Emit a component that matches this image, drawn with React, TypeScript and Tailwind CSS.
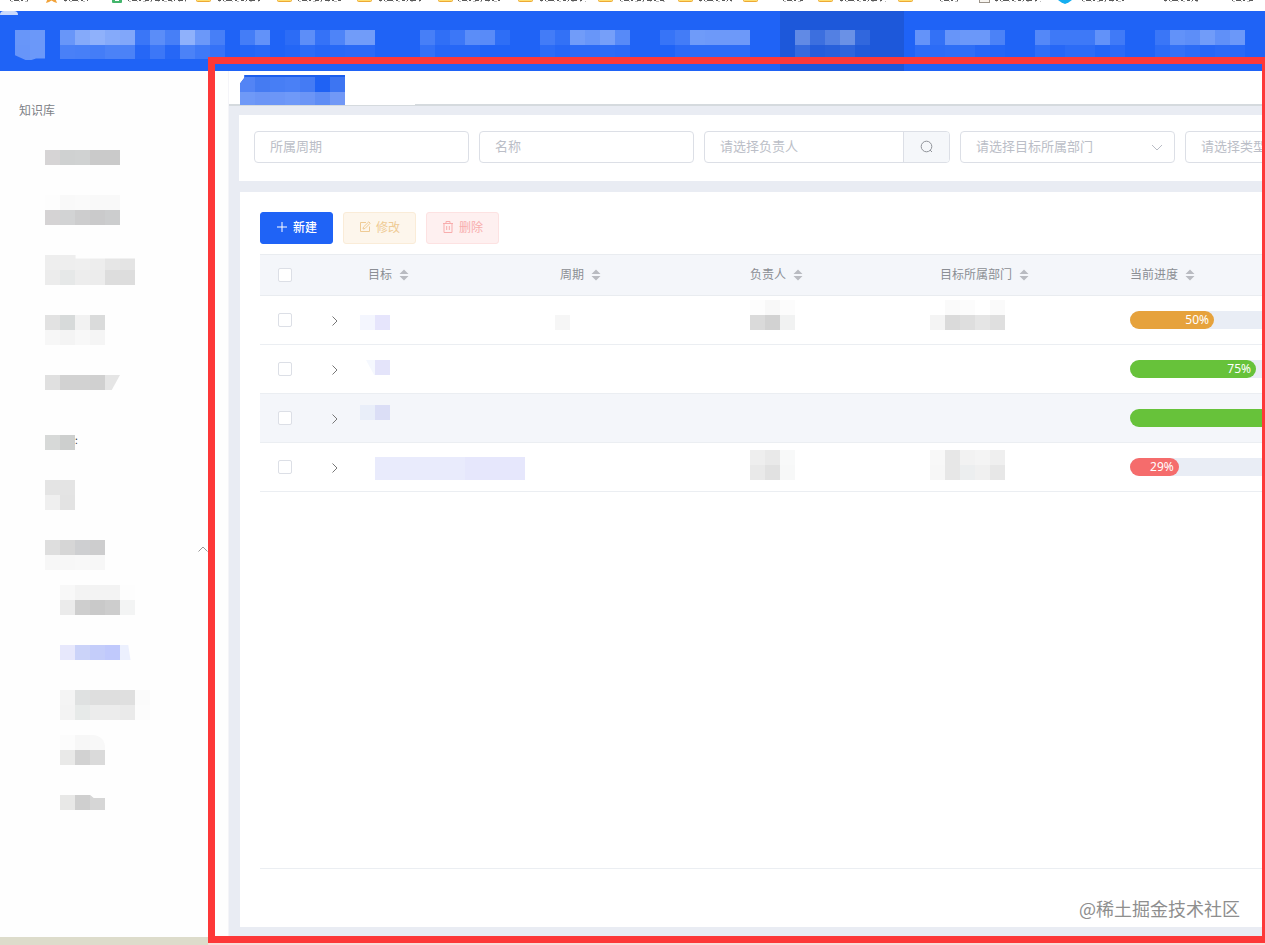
import React from 'react';

// A mosaic is a list of rows, every cell is 15px wide; "" leaves the cell empty
type Cells = string[][];

interface MenuItem {
  className: string;
  cells: Cells;
}

interface GoalRow {
  goal: React.ReactNode;
  period?: React.ReactNode;
  owner?: React.ReactNode;
  dept?: React.ReactNode;
  percent: number;
  color: string;
  active?: boolean;
}

const Mosaic: React.FC<{ cells: Cells; className?: string }> = ({ cells, className = '' }) => (
  <div className={`shrink-0 ${className}`}>
    {cells.map((row, r) => (
      <div key={r} className="flex">
        {row.map((color, c) => (
          <span key={c} className="block h-[15px] w-[15px] shrink-0" style={{ backgroundColor: color || 'transparent' }} />
        ))}
      </div>
    ))}
  </div>
);

// Bookmarks
const folders = [197, 278, 358, 439, 519, 599, 679, 744, 819, 899];
const labels = [
  [10, 18], [64, 24], [128, 58], [218, 44], [298, 43], [379, 45], [458, 42], [540, 46],
  [620, 46], [699, 33], [783, 20], [840, 46], [940, 18], [995, 46], [1082, 42], [1164, 34], [1232, 22],
];

const BookmarkStrip = () => (
  <svg className="block h-[11px] w-full shrink-0" viewBox="0 0 1265 11">
    {labels.map(([x, width], index) => (
      <g key={x} stroke="#5a5a5a">
        <line x1={x} x2={x + width} y1="0.5" y2="0.5" strokeDasharray={index % 2 ? '3 2 1 2 6 3 2 4' : '1 3 5 2 2 4 4 2'} />
        <line x1={x + 1} x2={x + width} y1="1.5" y2="1.5" strokeDasharray={index % 2 ? '1 4 2 6' : '2 6 1 5 3 4'} strokeOpacity="0.4" />
      </g>
    ))}
    {folders.map((x) => (
      <rect key={x} x={x - 0.5} y="-4.5" width="14" height="6" rx="1" fill="#ffdf6e" stroke="#eda934" />
    ))}
    <path d="M46 3l1.500-4h8l1.500 4-3-1-2.500-1.500-2.500 1.500z" fill="#f2a33a" />
    <rect x="112" y="-2" width="10" height="5" rx="1" fill="#43b56c" />
    <rect x="115" y="0" width="4" height="1" fill="#fff" />
    <rect x="979.500" y="-3.500" width="10" height="6" fill="#f8f5f0" stroke="#9c948a" />
    <path d="M1058 0h14l-3.500 2.500-3.500 1.500-3.500-1.500z" fill="#14aef0" />
  </svg>
);

// Header
const w = (alpha: number) => (alpha ? `rgba(255,255,255,${alpha / 100})` : '');

const logoCells: Cells = [[w(33), w(34)], [w(32), w(34)]];
const titleCells: Cells = [
  [w(33), w(46), w(50), w(46), w(44), w(12), w(27), w(18), w(50), w(34), w(18)],
  [w(19), w(18), w(17), w(20), w(20), w(3), w(13), w(3), w(20), w(14), w(10)],
];

const navItems: MenuItem[] = [
  { className: 'w-[120px]', cells: [[w(18), w(8), w(13), w(27), w(26), w(7)], [w(9), w(3), w(3), w(3), '', '']] },
  { className: 'w-[120px]', cells: [[w(16), w(9), w(37), w(33), w(39), w(25)], [w(6), w(3), w(5), w(5), w(6), w(5)]] },
  { className: 'w-[120px]', cells: [[w(11), w(16), w(36), w(35), w(35), w(35)], ['', w(5), w(6), w(6), w(6), w(6)]] },
  { className: 'mr-[11px] w-[124px] bg-[#1d58da]', cells: [['', w(30), w(14), w(24), w(34), w(9)], ['', w(11), w(3), w(5), w(8), w(2)]] },
  { className: 'w-[120px]', cells: [[w(31), w(9), w(32), w(34), w(34), w(20)], [w(6), w(6), w(7), w(7), w(3), w(2)]] },
  { className: 'w-[120px]', cells: [[w(24), w(14), w(14), w(14), w(30), w(15)], [w(7), w(3), w(6), w(6), w(2), w(5)]] },
  { className: 'w-[110px]', cells: [[w(12), w(30), w(28), w(37), w(29), w(34)], [w(6), w(9), w(6), w(3), w(5), w(4)]] },
];

const Header = () => (
  <header className="flex h-[60px] w-full shrink-0 overflow-hidden bg-[#1f63f6]">
    <div className="-mr-[3px] h-1 w-[18px] shrink-0 rounded-t-full bg-[#cbdafb]" />
    <Mosaic cells={logoCells} className="mt-[19px] h-[30px] [clip-path:polygon(0_0,100%_0,100%_95%,70%_95%,55%_100%,35%_100%,0_84%)]" />
    <Mosaic cells={titleCells} className="mt-[19px] ml-[15px] h-[29px] overflow-hidden" />
    <Mosaic cells={[[w(17), w(30)], [w(2), w(4)]]} className="mt-[19px] ml-[15px]" />
    <Mosaic cells={[[w(6), w(28), w(10), w(21), w(37), w(37)], [w(2), w(6), w(3), w(4), w(5), w(5)]]} className="mt-[19px] ml-[15px] mr-[45px]" />
    {navItems.map((item, index) => (
      <div key={index} className={`shrink-0 pt-[19px] ${item.className}`}>
        <Mosaic cells={item.cells} />
      </div>
    ))}
  </header>
);

// Sidebar
const menuItems: MenuItem[] = [
  { className: 'ml-[45px]', cells: [['#d6d4d5', '#cfd1d1', '#d0d2d2', '#cacaca', '#cacaca']] },
  { className: 'ml-[45px] mt-[30px]', cells: [['#fdfdfd', '#f9f9f9', '#fafafa', '#f9f9f9', '#f9f9f9'], ['#d5d3d4', '#d2d3d4', '#cdcdce', '#cacacb', '#cccdce']] },
  { className: 'ml-[45px] mt-[30px] [clip-path:polygon(0_0,34%_0,34%_12%,100%_12%,100%_100%,0_100%)]', cells: [['#eeeeee', '#eeeeee', '#efefef', '#ededed', '#e6e6e6', '#e4e4e4'], ['#ececec', '#e6e8e8', '#ededed', '#ececec', '#dddddd', '#dddddd']] },
  { className: 'ml-[45px] mt-[30px]', cells: [['#e2e2e2', '#d7dada', '#f2f2f2', '#dadbdb'], ['#f7f7f7', '#f4f4f4', '#f8f8f8', '#f5f5f5']] },
  { className: 'ml-[45px] mt-[30px] [clip-path:polygon(0_0,100%_0,89%_100%,0_100%)]', cells: [['#e0e0e0', '#d2d2d2', '#d2d2d2', '#d0d0d0', '#e5e5e5']] },
  { className: 'ml-[45px] mt-[45px]', cells: [['#d7d9d8', '#cdcfce']] },
  { className: 'ml-[45px] mt-[30px]', cells: [['#e4e4e4', '#e4e4e4'], ['#efefef', '#e3e3e3']] },
  { className: 'ml-[45px] mt-[30px]', cells: [['#dedede', '#d6d6d6', '#cecfd1', '#cdcdce'], ['#f7f7f7', '#f7f7f7', '#f8f8f8', '#f7f7f7']] },
  { className: 'ml-[60px] mt-[15px]', cells: [['#f8f8f8', '#f3f3f3', '#f3f3f3', '#f3f3f3', '#fdfdfd'], ['#ebebeb', '#cecece', '#c9c9c9', '#cdcdcd', '#f3f4f4']] },
  { className: 'ml-[60px] mt-[30px] [clip-path:polygon(0_0,91%_0,94%_100%,0_100%)]', cells: [['#e7e8fc', '#cbd3f9', '#c4cdfa', '#c0c9fc', '#ecf0fe']] },
  { className: 'ml-[60px] mt-[30px]', cells: [['#f4f4f4', '#dfe1e1', '#dedede', '#dedede', '#dfdfdf', '#fbfbfb'], ['#f3f3f3', '#e7eae9', '#ececec', '#ececec', '#eaeaea', '#fcfcfc']] },
  { className: 'ml-[60px] mt-[15px] w-[45px] overflow-hidden rounded-tr-xl', cells: [['#fcfcfc', '#f7f7f7', '#f8f8f8'], ['#e9e9e8', '#d2d2d2', '#dadada']] },
  { className: 'ml-[60px] mt-[30px] [clip-path:polygon(0_0,67%_0,75%_20%,100%_20%,100%_100%,0_100%)]', cells: [['#e8e8e7', '#cfcfcf', '#d6d6d6']] },
];

const Sidebar = () => (
  <aside className="flex w-[229px] shrink-0 flex-col border-r border-[#f4f4f8] bg-[#fefefe]">
    <h2 className="flex h-[79px] shrink-0 items-center pb-px pl-[19px] text-xs text-[#808287]">知识库</h2>
    {menuItems.map((item, index) => (
      <div key={index} className="flex items-start">
        <Mosaic cells={item.cells} className={item.className} />
        {index === 5 && <span className="mt-[44px] text-[10px] leading-[12px] text-[#333]">:</span>}
        {index === 7 && (
          <svg className="mt-[36px] ml-[93px] h-[6px] w-[10px]" viewBox="0 0 10 6" fill="none" stroke="#999">
            <path d="M0.500 5.500L5 1l4.500 4.500" />
          </svg>
        )}
      </div>
    ))}
    <div className="mt-auto h-2 w-full bg-[#dddccb]" />
  </aside>
);

// Filters
const Field: React.FC<{ text: string; className?: string; children?: React.ReactNode }> = ({ text, className = 'w-[215px]', children }) => (
  <div className={`flex h-8 shrink-0 items-center justify-between overflow-hidden rounded border border-[#dcdfe6] bg-white pl-[15px] text-[13px] text-[#bbbec7] ${className}`}>
    <span className="-mt-[3px] whitespace-nowrap">{text}</span>
    {children}
  </div>
);

const Filters = () => (
  <section className="mt-[9px] ml-[10px] flex h-[66px] shrink-0 gap-2.5 overflow-hidden bg-white pt-4 pl-[15px]">
    <Field text="所属周期" />
    <Field text="名称" />
    <Field text="请选择负责人" className="w-[246px]">
      <span className="flex h-full w-[46px] items-center justify-center border-l border-[#dcdfe6] bg-[#f5f7fa]">
        <svg className="-mt-0.5 h-[13px] w-[13px]" viewBox="0 0 13 13" fill="none" stroke="#909399">
          <circle cx="6.500" cy="6.500" r="5.300" />
          <path d="M10 10l2 2" />
        </svg>
      </span>
    </Field>
    <Field text="请选择目标所属部门">
      <svg className="mr-[11px] h-[7px] w-[12px]" viewBox="0 0 12 7" fill="none" stroke="#b9bcc5">
        <path d="M1 1l5 5 5-5" />
      </svg>
    </Field>
    <Field text="请选择类型" />
  </section>
);

// Toolbar
const PlusIcon = () => (
  <svg className="h-3 w-3" viewBox="0 0 12 12" fill="none" stroke="currentColor">
    <path d="M6 1v10M1 6h10" />
  </svg>
);

const EditIcon = () => (
  <svg className="h-3 w-3" viewBox="0 0 12 12" fill="none" stroke="currentColor">
    <path d="M7 1.500H1.500v9h9V5.500M4 8l.5-2L9.800 .8l1.400 1.400L6 7.500z" />
  </svg>
);

const TrashIcon = () => (
  <svg className="h-3 w-3" viewBox="0 0 12 12" fill="none" stroke="currentColor">
    <path d="M1 2.500h10M2 2.500v9h8v-9M4 2.500v-2h4v2M4.700 5v4M7.300 5v4" />
  </svg>
);

const ToolButton: React.FC<{ text: string; icon: React.ReactNode; className: string }> = ({ text, icon, className }) => (
  <button className={`flex h-8 w-[73px] items-center justify-center gap-[5px] rounded-[3px] border pb-0.5 text-xs ${className}`}>
    {icon}
    <span>{text}</span>
  </button>
);

// Table
const SortIcon = () => (
  <svg className="mt-0.5 h-3 w-[10px]" viewBox="0 0 10 12" fill="#b9bbc1">
    <path d="M5 0.500l4.500 4.500h-9zM5 11.500L0.500 7h9z" />
  </svg>
);

const Th: React.FC<{ text: string; className: string }> = ({ text, className }) => (
  <div className={`flex shrink-0 items-center gap-[7px] whitespace-nowrap ${className}`}>
    <span>{text}</span>
    <SortIcon />
  </div>
);

const Checkbox = () => (
  <div className="flex w-[50px] shrink-0 justify-center">
    <span className="block h-3.5 w-3.5 rounded-[2px] border border-[#dcdfe6] bg-white" />
  </div>
);

const rows: GoalRow[] = [
  {
    goal: <Mosaic cells={[['#f4f6fe', '#e6e5fc']]} className="mt-[19px]" />,
    period: <Mosaic cells={[['#f6f6f6']]} className="mt-[19px] ml-[5px]" />,
    owner: <Mosaic cells={[['#fdfdfd', '#f8f8f8', '#fcfcfc'], ['#dadada', '#d2d2d2', '#f1f2f2']]} className="mt-1 ml-[10px]" />,
    dept: <Mosaic cells={[['', '#fafafa', '#fcfcfc', '', '#fafafa'], ['#f4f4f4', '#dadada', '#dedede', '#e5e5e5', '#dfdfdf']]} className="mt-1" />,
    percent: 50,
    color: '#e6a23c',
  },
  {
    goal: <Mosaic cells={[['#f5f8fe', '#e4e4fa']]} className="mt-[15px] w-[30px] [clip-path:polygon(20%_0,100%_0,100%_100%,47%_100%)]" />,
    percent: 75,
    color: '#67c23a',
  },
  { goal: <Mosaic cells={[['#e9eef9', '#dbdef6']]} className="mt-[11px]" />, percent: 100, color: '#67c23a', active: true },
  {
    goal: (
      <div className="mt-[14px] ml-[15px] flex h-[23px] w-[150px]">
        <span className="w-[90px] bg-[#e9ebfc]" />
        <span className="w-[60px] bg-[#e6e7fc]" />
      </div>
    ),
    owner: <Mosaic cells={[['#eeeeee', '#e9e9e9', '#f8f9f9'], ['#e9e9e9', '#e1e1e1', '#f7f8f8']]} className="mt-[7px] ml-[10px]" />,
    dept: <Mosaic cells={[['#f8f8f8', '#e7e7e7', '#f2f2f2', '#f4f4f4', '#efefef'], ['#f7f7f7', '#e7e7e7', '#eceeef', '#f0f0f0', '#e7e7e7']]} className="mt-[7px]" />,
    percent: 29,
    color: '#f56c6c',
  },
];

const GoalTable = () => (
  <div className="mt-2.5 text-xs text-[#8b8e94]">
    <div className="flex h-[42px] items-center border-y border-[#e9ecf0] bg-[#f4f6fa]">
      <Checkbox />
      <Th text="目标" className="w-[240px] pb-0.5 pl-[58px]" />
      <Th text="周期" className="w-[190px] pb-0.5 pl-[10px]" />
      <Th text="负责人" className="w-[190px] pb-0.5 pl-[10px]" />
      <Th text="目标所属部门" className="w-[190px] pb-0.5 pl-[10px]" />
      <Th text="当前进度" className="w-[145px] pb-0.5 pl-[10px]" />
    </div>
    {rows.map((row, index) => (
      <div key={index} className={`flex h-[49px] border-b border-[#ebeef2] ${row.active ? 'bg-[#f4f6fa]' : ''}`}>
        <div className="flex items-center">
          <Checkbox />
          <div className="flex w-[50px] justify-center pt-px">
            <svg className="h-[10px] w-[6px]" viewBox="0 0 6 10" fill="none" stroke="#777">
              <path d="M0.500 0.500L5 5 0.500 9.500" />
            </svg>
          </div>
        </div>
        <div className="w-[190px] shrink-0">{row.goal}</div>
        <div className="w-[190px] shrink-0">{row.period}</div>
        <div className="w-[190px] shrink-0">{row.owner}</div>
        <div className="w-[190px] shrink-0">{row.dept}</div>
        <div className="flex min-w-0 flex-1 items-center overflow-hidden pl-[10px]">
          <div className="h-[18px] w-[168px] shrink-0 rounded-full bg-[#e9edf5]">
            <div
              className="flex h-full items-center justify-end rounded-full pr-[5px] font-['Noto_Sans',sans-serif] text-white"
              style={{ width: `${row.percent}%`, backgroundColor: row.color }}
            >
              {row.percent < 100 && `${row.percent}%`}
            </div>
          </div>
        </div>
      </div>
    ))}
  </div>
);

const App: React.FC = () => {
  return (
    <div className="relative flex h-[945px] w-[1265px] flex-col overflow-hidden bg-white font-['Noto_Sans_CJK_SC',sans-serif]">
      <BookmarkStrip />
      <Header />

      <div className="flex min-h-0 flex-1">
        <Sidebar />

        <main className="flex min-w-0 flex-1 flex-col bg-[#e9ecf3]">
          <div className="flex h-[35px] shrink-0 border-b-2 border-[#d5dade] bg-white pl-[11px]">
            <div className="mt-1 h-[30px] w-[105px] shrink-0 bg-[#1d5fec] pt-0.5 [clip-path:polygon(4%_0,100%_0,100%_100%,0_100%,0_28%,4%_10%)]">
              <div className="h-[28px] overflow-hidden">
                <Mosaic
                  cells={[
                    ['#5384f5', '#457bf2', '#477ef5', '#4a80f6', '#447bf4', '#1f62f4', '#3d75f2'],
                    ['#6f99f7', '#6b95f6', '#6c96f7', '#6f99f8', '#6b95f6', '#5f8df5', '#7198f6'],
                  ]}
                  className="-mt-[2px] border-t-2 border-[#1d5fec]"
                />
              </div>
            </div>
            <div className="h-[34px] w-[70px] bg-white" />
          </div>

          <Filters />

          <section className="mt-[11px] ml-[11px] flex h-[735px] shrink-0 flex-col overflow-hidden bg-white pt-5 pl-5">
            <div className="flex gap-2.5">
              <ToolButton text="新建" icon={<PlusIcon />} className="border-[#1f63f6] bg-[#1f63f6] font-medium text-white" />
              <ToolButton text="修改" icon={<EditIcon />} className="border-[#faecd8] bg-[#fdf6ec] text-[#efcb95]" />
              <ToolButton text="删除" icon={<TrashIcon />} className="border-[#fde2e2] bg-[#fef0f0] text-[#f8adad]" />
            </div>
            <GoalTable />
            <div className="mt-auto flex h-[59px] shrink-0 items-center justify-end border-t border-[#ebeef2] pt-[20px] pr-[25px]">
              <span className="text-lg text-[#8e8e8e]">@稀土掘金技术社区</span>
            </div>
          </section>
        </main>
      </div>

      {/* Highlight frame over the content area */}
      <div className="pointer-events-none absolute top-[57px] right-0 bottom-0 left-[208px] border-b-2 border-[#fbdcd8]">
        <div className="h-full w-full border-y-[7px] border-r-[3px] border-l-[7px] border-[#fd3838]" />
      </div>
    </div>
  );
};

export default App;
